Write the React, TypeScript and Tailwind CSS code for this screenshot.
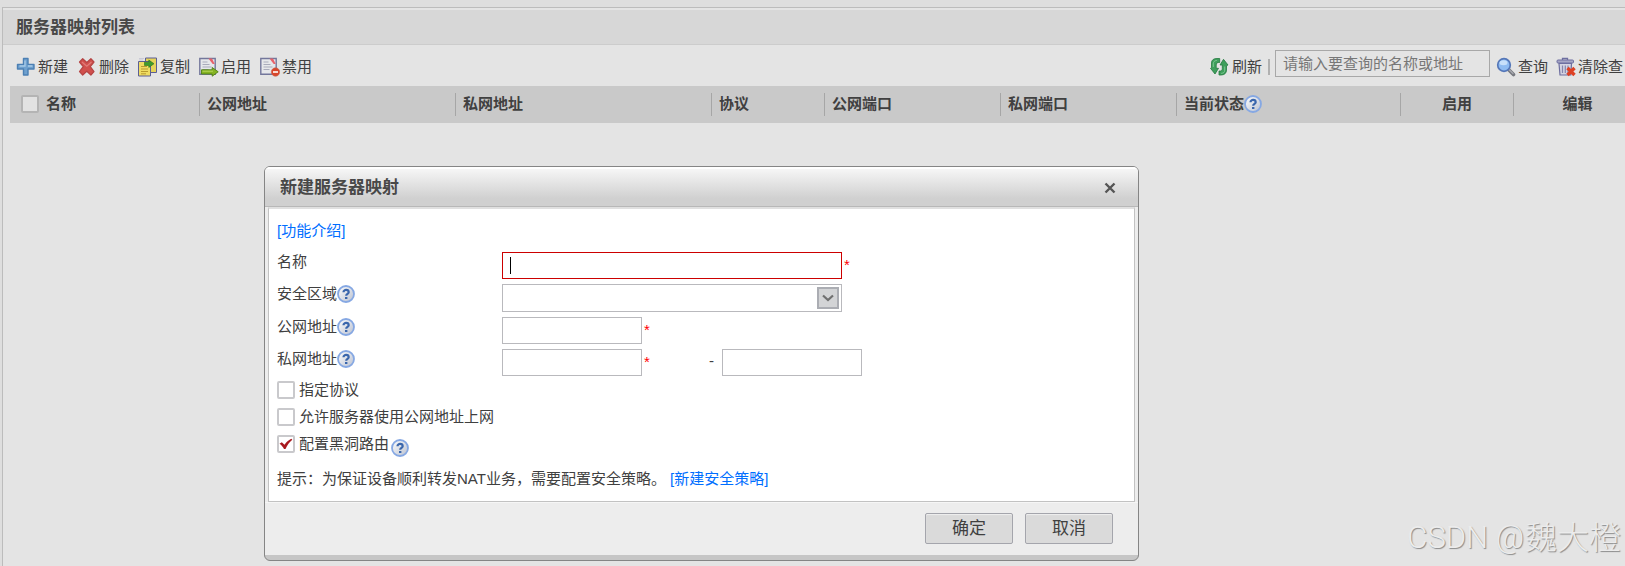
import React, { useState } from 'react';

const PlusIcon = () => (
  <svg width="20" height="20" viewBox="0 0 20 20">
    <path d="M7.500 1.500h4.500v6h6V12h-6v6H7.500v-6h-6V7.500h6z" fill="#6fa1cf" stroke="#4c80b4" strokeWidth="1.400" strokeLinejoin="round" />
    <path d="M9 3.500V9H3.500M12 9h4.500" fill="none" stroke="#a9cbe8" strokeWidth="1.300" />
  </svg>
);

const DeleteIcon = () => (
  <svg width="20" height="20" viewBox="0 0 20 20">
    <path
      d="M2.500 5l3.200-3.300 4.100 3.800 4.100-3.800L17 5l-3.700 4.600L17 14.700 13.900 18l-4.100-3.800L5.700 18l-3.200-3.300 3.700-5.100z"
      fill="#d1504d"
      stroke="#b54444"
      strokeWidth="1.200"
      strokeLinejoin="round"
    />
    <path d="M5 5l4.800 4.300L14.500 5" fill="none" stroke="#e07c79" strokeWidth="1.200" />
  </svg>
);

const CopyIcon = () => (
  <svg width="20" height="20" viewBox="0 0 20 20">
    <path d="M7.500 1h11v14.500h-11z" fill="#e6d35a" stroke="#5c5f94" />
    <path d="M.5 4.500h12v14.500H.5z" fill="#efdc62" stroke="#5c5f94" />
    <path d="M3 9.500h6M3 12h7M3 14.500h7M3 16.800h5" stroke="#b99b2e" />
    <path d="M1 1.500h5M1 3h4" stroke="#c9c9d6" />
    <path d="M6.500 8.500V5.200h4.300V3l5.200 3.700-5.200 3.800V8.500z" fill="#3f9b2c" stroke="#2b741d" strokeWidth=".6" />
  </svg>
);

const PageShape = () => (
  <>
    <path d="M.8 1.500h15.400v15.700H.8z" fill="#e6e7ea" stroke="#73779b" strokeWidth="1.400" />
    <path d="M3.500 5h5M3.500 7.500h7M3.500 10h9M3.500 12.500h6" stroke="#a9abbb" />
    <path d="M9.500 1.500h3.500l2.700 5.500h-2z" fill="#e8626a" />
  </>
);

const EnableIcon = () => (
  <svg width="20" height="20" viewBox="0 0 20 20">
    <PageShape />
    <path d="M2.500 12.800h10.700V10.500l6 4.300-6 4.400V17H2.500z" fill="#85b322" stroke="#4e8114" strokeWidth=".9" strokeLinejoin="round" />
    <path d="M3.500 14.200h10.500" stroke="#b5d75a" />
  </svg>
);

const DisableIcon = () => (
  <svg width="20" height="20" viewBox="0 0 20 20">
    <PageShape />
    <circle cx="15.500" cy="15" r="4.200" fill="#d9462b" stroke="#c5644f" strokeWidth=".6" />
    <path d="M13 15h5" stroke="#fbe9e4" strokeWidth="1.800" />
  </svg>
);

const RefreshIcon = () => (
  <svg width="20" height="20" viewBox="0 0 20 20">
    <g fill="#3f9f5c" stroke="#23793f" strokeWidth=".8" strokeLinejoin="round">
      <path d="M1.500 10.500V6c0-3 2-4.500 5.500-4.500h2.700V5.500c-2-.3-3.500.5-3.500 2.500v3.300h2.300L5 17 .5 11.300z" />
      <path d="M16.500 8.700V13c0 3-2 5-5.500 5H9v-4c2 .3 3.300-.5 3.300-2.500V8H10L13.500 2.300 18 8z" />
    </g>
    <path d="M3.300 10V6.800c0-2 1.200-3.200 3.500-3.400M14.700 9.500v3.700c0 2-1.200 3-3.500 3.200" fill="none" stroke="#7cc792" />
  </svg>
);

const SearchIcon = () => (
  <svg width="20" height="20" viewBox="0 0 20 20">
    <path d="M12.500 12.500l5 5" stroke="#77797f" strokeWidth="3.600" strokeLinecap="round" />
    <path d="M13 12.500l4 4" stroke="#a9abb1" strokeWidth="1.200" strokeLinecap="round" />
    <circle cx="8" cy="8" r="6.300" fill="#8fbcf2" stroke="#5577b8" strokeWidth="1.700" />
    <ellipse cx="7.500" cy="5.800" rx="4" ry="2.500" fill="#c8e0fa" />
  </svg>
);

const TrashIcon = () => (
  <svg width="20" height="20" viewBox="0 0 20 20">
    <path d="M6.500 3V1.500h5V3" fill="none" stroke="#6e6fa0" strokeWidth="1.300" />
    <rect x="1" y="3" width="16.500" height="3" rx="1" fill="#a6a7c6" stroke="#6e6fa0" />
    <path d="M3 6.500h12.500l-.7 11.500H4z" fill="#d4d4e2" stroke="#6e6fa0" strokeWidth="1.200" />
    <path d="M6.500 8.500v7.500M9.300 8.500v7.500M12 8.500v7.500" stroke="#8586ad" strokeWidth="1.200" />
    <path d="M11.500 11l7 7M18.500 11l-7 7" stroke="#dd4124" strokeWidth="3.400" />
  </svg>
);

const HelpIcon = () => (
  <svg width="18" height="18" viewBox="0 0 18 18" role="img" aria-label="help" className="shrink-0">
    <defs>
      <linearGradient id="helpFill" x1="0" y1="0" x2="1" y2="1">
        <stop offset="0" stopColor="#ffffff" />
        <stop offset="1" stopColor="#b9c0cf" />
      </linearGradient>
    </defs>
    <circle cx="9" cy="9" r="8" fill="url(#helpFill)" stroke="#86a8e3" strokeWidth="1.800" />
    <path d="M6.500 7.200c0-3 5.200-3 5.200 0 0 1.700-2.500 1.600-2.500 3.600" fill="none" stroke="#3a66ac" strokeWidth="2.200" />
    <rect x="8" y="12" width="2.400" height="2" fill="#3a66ac" />
  </svg>
);

const toolbarItems = [
  { label: '新建', icon: PlusIcon },
  { label: '删除', icon: DeleteIcon },
  { label: '复制', icon: CopyIcon },
  { label: '启用', icon: EnableIcon },
  { label: '禁用', icon: DisableIcon },
];

const columns = [
  { label: '公网地址', width: 'w-[256px]' },
  { label: '私网地址', width: 'w-[256px]' },
  { label: '协议', width: 'w-[113px]' },
  { label: '公网端口', width: 'w-[176px]' },
  { label: '私网端口', width: 'w-[176px]' },
  { label: '当前状态', width: 'w-[224px]', help: true },
  { label: '启用', width: 'w-[113px]', center: true },
  { label: '编辑', width: 'w-[128px]', center: true },
];

const checkboxClass =
  'appearance-none w-[18px] h-[18px] shrink-0 rounded-xs border-2 border-[#c9c9cc] bg-transparent';

interface ToolButtonProps {
  label: string;
  icon: React.FC;
}

const ToolButton: React.FC<ToolButtonProps> = ({ label, icon: Icon }) => (
  <button className="flex items-center gap-0.5 whitespace-nowrap">
    <Icon />
    <span>{label}</span>
  </button>
);

interface FieldProps {
  id: string;
  label: string;
  help?: boolean;
  children: React.ReactNode;
}

const Field: React.FC<FieldProps> = ({ id, label, help, children }) => (
  <div className="flex items-start">
    <div className="flex items-center w-[225px] h-5 shrink-0">
      <label htmlFor={id}>{label}</label>
      {help && <HelpIcon />}
    </div>
    <div className="flex items-center">{children}</div>
  </div>
);

interface CheckFieldProps {
  label: string;
  checked: boolean;
  onChange: () => void;
  help?: boolean;
}

const CheckField: React.FC<CheckFieldProps> = ({ label, checked, onChange, help }) => (
  <div className="flex items-center h-[18px]">
    <label className="relative flex items-center gap-1">
      <input type="checkbox" className={checkboxClass} checked={checked} onChange={onChange} />
      {checked && (
        <svg width="18" height="18" viewBox="0 0 18 18" className="absolute left-0 pointer-events-none">
          <path d="M2.500 8.800l2.300-1.500 2.700 2.400c2-2.800 3.800-4.400 6.800-6l1 1c-3 2.500-5 5.300-6.800 9.300H7C6 12 4.500 10.200 2.500 8.800z" fill="#a8191e" />
        </svg>
      )}
      <span>{label}</span>
    </label>
    {help && (
      <span className="pl-0.5 pt-2">
        <HelpIcon />
      </span>
    )}
  </div>
);

const Required = () => <span className="pl-0.5 pb-0.5 w-3 text-[#ff0000] font-['Liberation_Sans']">*</span>;

const MappingDialog = () => {
  const [protocol, setProtocol] = useState(false);
  const [allowPublic, setAllowPublic] = useState(false);
  const [blackhole, setBlackhole] = useState(true);

  const inputClass = 'h-[27px] border border-[#b9b9bd] bg-white px-2 outline-none';

  return (
    <div
      role="dialog"
      aria-labelledby="dialogTitle"
      className="absolute left-[264px] top-[166px] w-[875px] rounded-md border border-[#858585] bg-[#c6c6c6] pb-[5px] overflow-hidden"
    >
      <div className="bg-[#ededed]">
        <div className="flex items-center justify-between h-10 pl-[15px] pr-[21px] border-t-2 border-white border-b border-b-[#b8b8b8] bg-gradient-to-b from-[#f6f6f6] to-[#d0d0d0] to-80%">
          <h2 id="dialogTitle" className="text-[17px] font-bold text-[#484848]">新建服务器映射</h2>
          <button aria-label="close" className="p-px">
            <svg width="12" height="12" viewBox="0 0 12 12">
              <path d="M1.500 1.500l9 9M10.500 1.500l-9 9" stroke="#555" strokeWidth="2.400" />
            </svg>
          </button>
        </div>

        <div className="mx-[3px] border border-[#c2c2c2] border-t-2 border-t-[#e0e0e0] bg-white px-2 py-3">
          <a href="#intro" className="block h-5 text-[#006eff]">[功能介绍]</a>

          <div className="flex flex-col gap-[5px] pt-[11px]">
            <Field id="name" label="名称">
              <div className="relative flex">
                <input id="name" type="text" className="w-[340px] h-[27px] border border-[#cc0000] bg-white px-2 outline-none" />
                {/* text cursor */}
                <span className="absolute left-2 top-[5px] w-px h-[17px] bg-black" />
              </div>
              <Required />
            </Field>
            <Field id="zone" label="安全区域" help>
              <div className="relative flex">
                <select id="zone" className="appearance-none w-[340px] h-7 border border-[#b9b9bd] bg-white px-2 outline-none">
                  <option value=""></option>
                </select>
                <span className="absolute right-[3px] top-[3px] flex items-center justify-center w-[22px] h-[22px] border-2 border-[#abadb3] bg-[#d3d4d6] pointer-events-none">
                  <svg width="12" height="8" viewBox="0 0 12 8">
                    <path d="M1 1.500l5 4.500 5-4.500" fill="none" stroke="#707070" strokeWidth="2.200" />
                  </svg>
                </span>
              </div>
            </Field>
            <Field id="publicIp" label="公网地址" help>
              <input id="publicIp" type="text" className={`${inputClass} w-[140px]`} />
              <Required />
            </Field>
            <Field id="privateIp" label="私网地址" help>
              <input id="privateIp" type="text" className={`${inputClass} w-[140px]`} />
              <Required />
              <span className="w-[68px] pr-2 pb-1 text-right font-['Liberation_Sans']">-</span>
              <input type="text" aria-label="私网地址" className={`${inputClass} w-[140px]`} />
            </Field>
          </div>

          <div className="flex flex-col gap-[9px] pt-[5px]">
            <CheckField label="指定协议" checked={protocol} onChange={() => setProtocol(!protocol)} />
            <CheckField label="允许服务器使用公网地址上网" checked={allowPublic} onChange={() => setAllowPublic(!allowPublic)} />
            <CheckField label="配置黑洞路由" checked={blackhole} onChange={() => setBlackhole(!blackhole)} help />
          </div>

          <p className="pt-4">
            提示：为保证设备顺利转发NAT业务，需要配置安全策略。{' '}
            <a href="#policy" className="text-[#006eff]">[新建安全策略]</a>
          </p>
        </div>

        <div className="flex justify-end gap-3 pt-[10px] pb-[11px] pr-[25px] border-t border-[#f6f6f6]">
          {['确定', '取消'].map((label) => (
            <button
              key={label}
              className="w-[88px] h-[31px] rounded-xs border border-[#a4a5ac] bg-[#dadada] text-[17px] shadow-[inset_0_1px_1px_#efefef]"
            >
              {label}
            </button>
          ))}
        </div>
      </div>
    </div>
  );
};

const App = () => {
  return (
    <div className="relative min-h-screen overflow-hidden bg-[#dedede] pt-[7px] pl-0.5 flex flex-col text-[15px] leading-5 text-[#404040] font-['Liberation_Sans','Noto_Sans_CJK_SC',sans-serif]">
      <div className="flex-1 -mr-4 border-t border-l border-[#bcbcbc] bg-[#e4e4e4]">
        <div className="flex items-center h-[37px] pl-[13px] pt-0.5 border-t-2 border-b border-t-[#e4e4e4] border-b-[#cccccc] bg-[#d7d7d7]">
          <h1 className="text-[17px] font-bold text-[#484848]">服务器映射列表</h1>
        </div>

        <div className="flex items-center justify-between h-[41px] pt-0.5 pl-[13px] pr-[18px]">
          <div className="flex items-center gap-[9px]">
            {toolbarItems.map((item) => (
              <ToolButton key={item.label} label={item.label} icon={item.icon} />
            ))}
          </div>
          <div className="flex items-center">
            <ToolButton label="刷新" icon={RefreshIcon} />
            <span className="ml-[6px] mr-[5px] w-0.5 h-4 bg-[#b0b0b0]" />
            <input
              type="text"
              aria-label="查询"
              placeholder="请输入要查询的名称或地址"
              className="w-[215px] h-[27px] mr-[6px] mb-[6px] px-[7px] border border-[#a8a8a8] bg-transparent outline-none placeholder:text-[#777777]"
            />
            <ToolButton label="查询" icon={SearchIcon} />
            <span className="w-2" />
            <ToolButton label="清除查" icon={TrashIcon} />
          </div>
        </div>

        <div className="pl-[7px]">
          <table className="w-full table-fixed bg-[#c9c9c9] text-left">
            <thead>
              <tr className="h-[37px]">
                <th className="w-[189px] p-0 font-bold">
                  <div className="flex items-center gap-[7px] h-[23px] pl-[11px] pb-0.5">
                    <input type="checkbox" aria-label="全选" className="appearance-none w-[18px] h-[18px] rounded-xs border-2 border-[#b4b4b4] bg-[#e2e2e2]" />
                    <span>名称</span>
                  </div>
                </th>
                {columns.map((col) => (
                  <th key={col.label} className={`${col.width} p-0 font-bold`}>
                    <div className={`flex items-center h-[23px] pb-px border-l border-[#a6a6a6] ${col.center ? 'justify-center' : 'pl-[7px]'}`}>
                      <span>{col.label}</span>
                      {col.help && <HelpIcon />}
                    </div>
                  </th>
                ))}
              </tr>
            </thead>
          </table>
        </div>
      </div>

      <MappingDialog />

      <div className="absolute right-1 bottom-2 flex items-center gap-px text-[32px] leading-10 font-light text-[#ececec] [text-shadow:1px_1px_1px_#8a8a8a]">
        <span className="text-[31px] font-['Roboto']">CSDN @</span>
        <span>魏大橙</span>
      </div>
    </div>
  );
};

export default App;
